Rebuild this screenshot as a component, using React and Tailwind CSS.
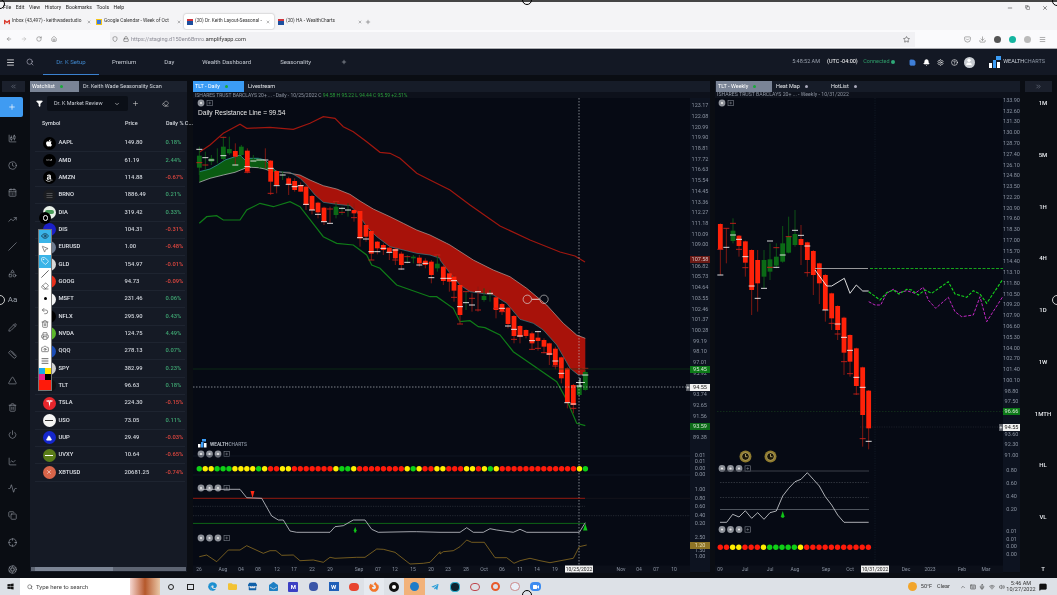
import React from "react";
import {
  Menu, Search, Plus, Save, Bell, Settings, HelpCircle, ArrowLeft, ArrowRight, RotateCw, Home, Shield, Lock, Star,
  Download, X, Minus, Copy, ChevronDown, ChevronsLeft, ChevronsRight, Filter, Eraser, CandlestickChart, Clock,
  CalendarDays, TrendingUp, Slash, Shapes, Pencil, Triangle, Trash2, Power, LineChart, Activity, Crosshair, Aperture,
  Ruler, Eye, MousePointer2, Tag as TagIcon, Undo2, Camera, Printer, AlignJustify, Pocket, ChevronUp, Mic, Wifi, Volume2, MessageSquare, User, Keyboard,
} from "lucide-react";
import { FaApple, FaAmazon, FaWindows, FaFirefoxBrowser, FaEdge, FaFolder, FaTelegramPlane, FaVideo, FaEnvelopeOpen, FaStore } from "react-icons/fa";
import { SiAmd, SiTesla, SiGmail } from "react-icons/si";

const z5 = (x, y) => [190 + x / 3, 95 + y / 3];
const z6 = (x, y) => [430 + x / 3, 260 + y / 3];
const z7 = (x, y) => [190 + x / 3, 430 + y / 3];
const z8 = (x, y) => [440 + x / 3, 430 + y / 3];
const z9 = (x, y) => [715 + x / 3, 80 + y / 3];
const z10 = (x, y) => [715 + x / 3, 270 + y / 3];
const z11 = (x, y) => [715 + x / 3, 440 + y / 3];
const pts = (m, a) => a.map((p) => m(p[0], p[1]).map((v) => v.toFixed(1)).join(",")).join(" ");

const D5 = [
  [28,182,218,"g",155,240,163,203],[46,0,0,"g",170,225,188,210],[64,190,200,"g",180,210,195,0],[82,0,0,"g",160,205,0,0],
  [100,155,192,"g",125,195,182,127],[118,162,175,"g",125,180,0,0],[136,168,185,"r",145,210,210,0],[154,155,180,"g",150,185,0,0],
  [172,167,230,"r",160,235,215,232],[190,0,0,"g",180,215,198,0],[208,0,0,"g",190,220,195,0],[226,0,0,"r",160,220,195,0],
  [242,197,260,"r",195,300,220,295],[260,228,270,"r",225,295,272,0],[278,0,0,"g",228,255,240,0],[296,250,268,"r",245,300,268,0],
  [314,258,285,"r",250,290,275,0],[332,270,290,"r",262,290,272,0],[348,275,330,"r",270,345,328,0],[366,303,345,"r",300,358,345,0],
  [384,323,352,"r",320,370,358,0],[402,338,380,"r",335,390,380,0],[420,0,0,"r",335,385,385,342],[438,335,360,"g",320,370,0,320],
  [456,0,0,"g",335,360,340,352],[474,0,0,"g",325,365,345,0],[492,345,355,"r",325,380,0,368],[510,348,430,"r",345,455,428,0],
  [528,390,425,"r",385,440,432,0],[544,408,476,"r",405,495,470,495],[562,440,460,"r",438,478,470,0],[580,450,465,"r",445,480,460,0],
  [598,458,472,"r",455,495,472,0],[616,462,490,"r",458,510,465,495],[634,476,510,"r",470,525,522,0],[652,0,0,"g",480,505,502,485],
  [670,485,490,"g",480,505,0,0],[688,488,505,"r",480,515,510,0],[706,497,510,"r",490,520,505,0],[724,500,540,"r",495,565,548,0],
  [742,506,520,"g",480,530,0,480],[760,515,558,"r",510,570,550,0],[778,535,560,"r",530,590,550,0],
];
const D6 = [
  [72,50,92,"r",45,125,62,112],[90,75,165,"r",70,192,140,192],[108,0,0,"g",95,150,128,95],[126,0,0,"r",100,155,135,115],
  [144,0,0,"r",80,155,95,150],[162,108,120,"g",85,125,0,0],[180,0,0,"g",90,125,100,0],[198,112,150,"r",110,175,0,145],
  [216,132,155,"r",128,165,145,155],[234,143,192,"r",140,205,198,0],[252,168,228,"r",165,250,208,238],[270,198,230,"r",195,250,228,0],
  [288,210,228,"r",208,235,0,0],[306,220,250,"r",215,270,242,268],[324,233,243,"r",212,272,215,265],[342,240,260,"r",235,280,0,278],
  [358,250,285,"r",248,315,282,0],[376,266,315,"r",260,328,303,318],[394,292,355,"r",290,370,340,0],[412,325,428,"r",322,445,428,0],
  [430,375,435,"r",372,460,432,445],[448,375,405,"g",360,410,378,0],[466,336,390,"g",330,392,345,325],
];
const W9 = [
  [16,432,508,"r",430,585,585,508],[34,0,0,"r",445,550,502,445],[54,452,483,"g",415,490,465,430],[72,467,498,"r",465,530,478,508],
  [91,484,548,"r",482,590,530,563],[258,477,495,"r",435,555,466,0],[165,538,575,"g",490,600,483,562],[184,530,557,"g",490,565,562,503],[203,490,545,"g",438,548,525,0],[221,470,518,"g",410,520,0,470],
  [240,462,495,"g",390,500,451,0],[277,487,540,"r",485,590,498,578],[295,513,585,"r",510,645,0,0],
  [313,550,610,"r",548,672,0,0],
];
const W10 = [
  [331,15,120,"r",12,155,120,0],[350,70,145,"r",68,180,0,160],[368,108,180,"r",106,210,162,192],[387,143,248,"r",140,315,202,275],
  [405,195,275,"r",193,320,241,311],[424,235,348,"r",233,375,322,372],[443,292,435,"r",290,530,352,506],[461,362,475,"r",360,538,514,0],
  [110,-60,60,"r",-62,135,48,0],[128,-30,40,"r",-60,125,85,0],[147,-30,20,"g",-60,55,55,0],
];
const CLOUD_G = [[28,230],[60,222],[82,210],[105,195],[135,185],[150,180],[165,195],[180,190],[205,190],[225,195],[240,210],[250,222],[262,230],[245,230],[225,222],[205,218],[185,217],[165,220],[135,232],[100,240],[60,250],[28,262]];
const RED_TOP = [[262,230],[300,235],[330,240],[360,255],[400,272],[440,282],[480,298],[510,318],[550,342],[600,365],[640,385],[680,405],[720,420],[770,445],[780,450]].map((p) => z5(p[0], p[1])).concat([[130,0],[190,30],[240,50],[290,85],[350,135],[400,190],[440,225],[466,235]].map((p) => z6(p[0], p[1])));
const RED_BOT = [[262,230],[300,232],[330,250],[350,270],[375,300],[400,322],[440,328],[480,332],[500,350],[530,395],[560,425],[600,455],[640,465],[680,475],[720,480],[750,490]].map((p) => z5(p[0], p[1])).concat([[30,0],[60,40],[90,75],[120,95],[190,105],[230,130],[270,178],[310,190],[340,210],[380,255],[420,325],[445,345],[466,345]].map((p) => z6(p[0], p[1])));
const str = (a) => a.map((p) => p[0].toFixed(1) + "," + p[1].toFixed(1)).join(" ");

function Candles({ data, map }) {
  return data.map((d, i) => {
    const [zx, t, b, c, wt, wb, w, r] = d;
    const x = map(zx, 0)[0];
    const y = (v) => map(0, v)[1];
    const wick = c === "g" ? "#0d5a16" : "#8a1a12";
    const body = c === "g" ? "#0b6a16" : "#ff2209";
    return (
      <g key={i}>
        <line x1={x} x2={x} y1={y(wt)} y2={y(wb)} stroke={wick} strokeWidth="0.9" />
        {t !== 0 && <rect x={x - 2.4} y={y(t)} width="4.8" height={y(b) - y(t)} fill={body} />}
        {r !== 0 && <line x1={x - 3} x2={x + 3} y1={y(r)} y2={y(r)} stroke="#c9201a" strokeWidth="0.9" />}
        {w !== 0 && <line x1={x - 3} x2={x + 3} y1={y(w)} y2={y(w)} stroke="#f2f2f2" strokeWidth="0.9" />}
      </g>
    );
  });
}

function IconRow({ x, y, n = 3 }) {
  const xs = [0, 8.5, 17].slice(0, n);
  return (
    <g>
      {xs.map((d) => (
        <g key={d}>
          <circle cx={x + d} cy={y} r="3.4" fill="#8d9199" />
          <circle cx={x + d} cy={y} r="1.1" fill="#e8e8e8" />
        </g>
      ))}
      <rect x={x + n * 8.5 + 0.5 - 3} y={y - 2.7} width="5.4" height="5.4" fill="none" stroke="#7c828c" strokeWidth="0.6" />
      <path d={`M${x + n * 8.5 + 0.2} ${y - 1.4}v2.8M${x + n * 8.5 - 1.2} ${y}h2.8`} stroke="#8d9199" strokeWidth="0.5" />
    </g>
  );
}

const DOTC = { G: "#0fd016", Y: "#ffee00", R: "#ff1a0a" };
const MAIN_DOTS = "GYYGGGYYYYGYRRYYRRRRRRRYGGYRRRRRRRRYGYRRYY" + "RRRYYRYGY" + "RRRRRRRRRRRRR" + "YG";
const WEEK_DOTS = "RRYYRRRYGGGGGYRRRRRRRRRRR";
const MAIN_TIME = [[199,"26"],[223,"Aug"],[241,"04"],[258,"08"],[277,"12"],[294,"17"],[312,"22"],[330,"29"],[359,"Sep"],[378,"07"],[395,"12"],[413,"15"],[431,"20"],[448,"23"],[466,"28"],[484,"Oct"],[502,"06"],[520,"11"],[537,"14"],[555,"19"],[621,"Nov"],[639,"04"],[656,"07"],[674,"10"]];
const WEEK_TIME = [[720,"09"],[745,"Jul"],[770,"Jul"],[795,"Aug"],[826,"Sep"],[850,"Oct"],[906,"Dec"],[930,"2023"],[962,"Feb"],[986,"Mar"]];

function AxisLabel({ children, h, hidden }) {
  return <div style={{ height: h }} className="flex items-center justify-center text-[5.5px] leading-none text-[#8b93a1]">{hidden ? null : children}</div>;
}

function PriceTag({ top, bg, text, children }) {
  return (
    <div style={{ top, backgroundColor: bg, color: text }} className="absolute left-0 right-0 h-[6.5px] flex items-center justify-center text-[5.5px] leading-none">
      {children}
    </div>
  );
}

function DailyChart() {
  return (
    <svg viewBox="193 98 497 475" className="w-[497px] h-[475px] block bg-[#060a14]" style={{ fontFamily: "Roboto, sans-serif" }}>
      <polygon points={pts(z5, CLOUD_G)} fill="#0a5c12" />
      <polyline points={pts(z5, [[28,230],[60,222],[82,210],[105,195],[135,185],[150,180],[165,195],[180,190],[205,190],[225,195],[240,210],[250,222],[262,230]])} fill="none" stroke="#3aa7a7" strokeWidth="0.7" />
      <polyline points={pts(z5, [[28,262],[60,250],[100,240],[135,232],[165,220],[185,217],[205,218],[225,222],[245,230]])} fill="none" stroke="#c8c8c8" strokeWidth="0.7" />
      <polygon points={str(RED_TOP.concat(RED_BOT.slice().reverse()))} fill="#a8120a" />
      <polyline points={str(RED_TOP)} fill="none" stroke="#c4b9b0" strokeWidth="0.6" />
      <polyline points={str(RED_BOT)} fill="none" stroke="#3a8f98" strokeWidth="0.6" />
      <polyline points={pts(z5, [[28,172],[60,150],[100,115],[150,88],[170,100],[240,97],[310,103],[360,85],[400,65],[435,70],[460,95],[490,110],[530,140],[570,172],[600,175],[630,190],[680,235],[720,255],[780,285]]) + " 470,205 500,226 530,240 560,252 575,256 585,262"} fill="none" stroke="#a0170f" strokeWidth="1.2" />
      <polyline points={pts(z5, [[28,385],[50,365],[80,362],[100,375],[150,375],[170,345],[210,325],[250,335],[300,320],[330,335],[400,425],[440,445],[490,450],[530,480],[545,510],[570,520],[620,570]]) + " " + pts(z6, [[0,110],[20,110],[70,145],[90,185],[120,182],[145,200],[165,203],[210,225],[250,275],[300,310],[380,365],[410,420],[440,490],[466,497]])} fill="none" stroke="#0f7c18" strokeWidth="1.2" />
      <Candles data={D5} map={z5} />
      <Candles data={D6} map={z6} />
      <line x1="193" x2="690" y1="369" y2="369" stroke="#0e3c14" strokeWidth="0.6" />
      <line x1="579" x2="579" y1="98" y2="565" stroke="#cfd3d8" strokeWidth="0.6" strokeDasharray="1.5 1.5" />
      <line x1="193" x2="690" y1="387" y2="387" stroke="#cfd3d8" strokeWidth="0.6" strokeDasharray="1.5 1.5" />
      <path d="M580 378v9M576 382.5h9" stroke="#fff" strokeWidth="0.8" />
      <circle cx="527.3" cy="299.3" r="4.2" fill="none" stroke="#d8d8d8" strokeWidth="0.7" />
      <circle cx="544" cy="299.3" r="4.2" fill="none" stroke="#c4c4c4" strokeWidth="0.7" />
      <line x1="532" x2="539.5" y1="299.3" y2="299.3" stroke="#fff" strokeWidth="0.8" />

      <IconRow x={201} y={103} n={1} />
      <text x="198" y="114.5" fontSize="6.6" fill="#e8e8e8" fontFamily="Liberation Sans, sans-serif">Daily Resistance Line = 99.54</text>

      <g transform="translate(198 439)">
        <rect x="0" y="5" width="2.5" height="3.5" fill="#fff" />
        <rect x="3" y="3" width="2.5" height="5.5" fill="#3b9cf5" />
        <rect x="6" y="4" width="2.5" height="4.5" fill="#fff" />
        <rect x="4" y="0" width="4" height="2.5" fill="#3b9cf5" />
      </g>
      <text x="210" y="446" fontSize="4.8" fontWeight="500" fill="#cfd5dd">WEALTH<tspan fill="#8e97a5">CHARTS</tspan></text>
      <IconRow x={201} y={454} />
      {[456, 475].map((y) => <line key={y} x1="193" x2="690" y1={y} y2={y} stroke="#161c28" strokeWidth="0.6" />)}
      {MAIN_DOTS.split("").map((c, i) => <circle key={i} cx={199.3 + i * 5.94} cy="468.7" r="2.7" fill={DOTC[c]} />)}

      <IconRow x={201} y={488} />
      <line x1="193" x2="585" y1="498.3" y2="498.3" stroke="#a51c10" strokeWidth="0.9" />
      <line x1="585" x2="690" y1="498.3" y2="498.3" stroke="#1c1a20" strokeWidth="0.6" />
      <line x1="193" x2="585" y1="506.3" y2="506.3" stroke="#3a3f48" strokeWidth="0.6" strokeDasharray="1.2 1.2" />
      <line x1="193" x2="690" y1="515.7" y2="515.7" stroke="#3a3f48" strokeWidth="0.6" strokeDasharray="1.2 1.2" />
      <line x1="193" x2="585" y1="523.4" y2="523.4" stroke="#0e6e16" strokeWidth="0.9" />
      <polyline points={pts(z7, [[28,178],[150,178],[170,203],[215,205],[245,258],[265,270],[280,270],[300,303],[320,307],[420,307],[435,290],[460,287],[490,270],[525,270],[545,298],[565,307],[660,305],[680,305],[750,307]]) + " " + pts(z8, [[0,307],[60,307],[80,293],[100,307],[130,307],[150,296],[170,300],[220,307],[240,298],[260,307],[418,307],[436,278]])} fill="none" stroke="#c9ccd2" strokeWidth="0.8" />
      <polygon points="250.5,491 254.5,491 252.5,498" fill="#ff2a14" />
      <polygon points="353.5,531 355.2,527 356.8,531" fill="#10c418" />
      <rect x="354.2" y="530" width="2" height="2.5" fill="#10c418" />
      <polygon points="583,530.5 585.3,523.5 587.5,530.5" fill="#10c418" />

      <IconRow x={201} y={538} />
      <polyline points={pts(z7, [[28,380],[50,375],[80,395],[115,360],[150,360],[170,347],[220,370],[240,362],[258,362],[275,376],[310,375],[330,392],[370,390],[400,397],[420,382],[435,385],[500,382],[525,382],[560,357],[580,358],[615,367],[660,402],[700,400],[720,397],[750,365]]) + " " + pts(z8, [[0,372],[10,365],[40,362],[60,350],[80,330],[95,337],[133,337],[165,383],[200,383],[222,400],[240,392],[270,385],[300,392],[330,398],[400,385],[418,350],[440,345]])} fill="none" stroke="#a07c24" strokeWidth="0.7" />

      <rect x="193" y="565.5" width="497" height="7.5" fill="#0b0f19" />
      {MAIN_TIME.map(([x, t]) => <text key={x} x={x} y="571" fontSize="5" textAnchor="middle" fill="#8b93a1">{t}</text>)}
      <rect x="565" y="565.5" width="28" height="7" fill="#f2f2f2" />
      <text x="579" y="571" fontSize="5" textAnchor="middle" fill="#222">10/25/2022</text>
    </svg>
  );
}

function WeeklyChart() {
  return (
    <svg viewBox="715 98 288 475" className="w-[288px] h-[475px] block bg-[#060a14]" style={{ fontFamily: "Roboto, sans-serif" }}>
      <line x1="875" x2="875" y1="98" y2="565" stroke="#1a2430" strokeWidth="0.6" strokeDasharray="1.2 1.2" />
      <line x1="717" x2="1003" y1="411.5" y2="411.5" stroke="#17401c" strokeWidth="0.6" strokeDasharray="1.5 1.5" />
      <line x1="860" x2="1003" y1="427" y2="427" stroke="#2a2e36" strokeWidth="0.6" strokeDasharray="1.2 1.2" />
      <Candles data={W9} map={z9} />
      <Candles data={W10} map={z10} />
      <line x1="815" x2="868" y1="268.5" y2="268.5" stroke="#bdbdbd" strokeWidth="0.8" />
      <line x1="870" x2="1003" y1="268.5" y2="268.5" stroke="#17b31c" strokeWidth="0.9" strokeDasharray="3 1.5" />
      <polyline points={pts(z10, [[300,0],[335,48],[350,48],[388,25],[405,70],[424,45],[443,63],[461,63]])} fill="none" stroke="#f4f4f4" strokeWidth="0.9" />
      <polyline points={pts(z10, [[461,95],[480,105],[497,105],[515,70],[535,58],[552,68],[575,62],[600,70],[625,52],[640,90],[662,115],[700,82],[720,125],[740,140],[775,135],[795,80],[815,155],[862,82]])} fill="none" stroke="#d62ad6" strokeWidth="0.9" strokeDasharray="3 1.5" />
      <polyline points={pts(z10, [[461,65],[495,90],[515,68],[535,60],[552,72],[575,58],[590,60],[610,75],[630,60],[650,70],[700,35],[720,72],[755,82],[775,62],[795,72],[815,100],[862,30]])} fill="none" stroke="#15d31c" strokeWidth="1.1" strokeDasharray="3 1.5" />
      <IconRow x={722} y={103} n={1} />

      {[745.5, 770.5].map((x) => (
        <g key={x}>
          <circle cx={x} cy="456.5" r="6" fill="#8e7a2e" />
          <circle cx={x} cy="456.5" r="3.8" fill="#1a1608" stroke="#e2cf82" strokeWidth="0.6" />
          <path d={`M${x} 454v2.7h2`} stroke="#e2cf82" strokeWidth="0.7" fill="none" />
        </g>
      ))}

      <IconRow x={722} y={468.5} />
      <line x1="720" x2="869" y1="471" y2="471" stroke="#3a3f48" strokeWidth="1.2" />
      <line x1="720" x2="869" y1="482.5" y2="482.5" stroke="#4a4f58" strokeWidth="0.6" strokeDasharray="1.5 1.2" />
      <line x1="720" x2="869" y1="497.5" y2="497.5" stroke="#4a4f58" strokeWidth="0.6" strokeDasharray="1.5 1.2" />
      <line x1="720" x2="869" y1="509.5" y2="509.5" stroke="#70757e" strokeWidth="0.7" />
      <polyline points={pts(z11, [[15,247],[35,247],[53,223],[72,231],[91,212],[110,235],[128,218],[147,238],[165,218],[184,213],[203,168],[221,145],[240,125],[258,118],[277,98],[295,118],[313,138],[331,170],[350,195],[368,225],[387,247],[461,247]])} fill="none" stroke="#d6d8dc" strokeWidth="0.8" />
      <polygon points="780.7,517 782.7,511 784.7,517" fill="#10c418" />
      <rect x="781.6" y="516" width="2.2" height="1.8" fill="#10c418" />
      <IconRow x={722} y={529.5} />
      {WEEK_DOTS.split("").map((c, i) => <circle key={i} cx={720.3 + i * 6.17} cy="547.3" r="2.7" fill={DOTC[c]} />)}

      <rect x="715" y="565.5" width="288" height="7.5" fill="#0b0f19" />
      {WEEK_TIME.map(([x, t]) => <text key={x} x={x} y="571" fontSize="5" textAnchor="middle" fill="#8b93a1">{t}</text>)}
      <rect x="861" y="565.5" width="28" height="7" fill="#f2f2f2" />
      <text x="875" y="571" fontSize="5" textAnchor="middle" fill="#222">10/31/2022</text>
    </svg>
  );
}

const MAIN_AXIS = Array.from({ length: 32 }, (_, i) => (123.17 - i * 1.09).toFixed(2));
const WEEK_AXIS = Array.from({ length: 34 }, (_, i) => (133.9 - i * 1.3).toFixed(2));
const MAIN_COVERED = [14, 26, 30];
const WEEK_COVERED = [29, 30];

function Logo({ bg, children }) {
  return <div style={{ backgroundColor: bg }} className="w-[13px] h-[13px] rounded-full flex items-center justify-center shrink-0 overflow-hidden">{children}</div>;
}

const ROWS = [
  ["AAPL","149.80","0.18%","#000",<FaApple className="w-[8px] h-[8px] text-white" />],
  ["AMD","61.19","2.44%","#000",<SiAmd className="w-[6px] h-[6px] text-white" />],
  ["AMZN","114.88","-0.67%","#000",<FaAmazon className="w-[8px] h-[8px] text-white" />],
  ["BRNO","1886.49","0.21%","#1a1c20",<AlignJustify className="w-[7px] h-[7px] text-[#777]" />],
  ["DIA","319.42","0.33%","#e8f0e8",<span className="w-[9px] h-[4px] bg-[#4a9d5a] rounded-sm" />],
  ["DIS","104.31","-0.31%","#1c20c8",null],
  ["EURUSD","1.00","-0.48%","#6f7c90",null],
  ["GLD","154.97","-0.01%","#d8d8d8",null],
  ["GOOG","94.73","-0.09%","#e8301c",null],
  ["MSFT","231.46","0.06%","#f2f2f2",null],
  ["NFLX","295.90","0.43%","#000",null],
  ["NVDA","124.75","4.49%","#5cb82a",null],
  ["QQQ","278.13","0.07%","#1d4fb8",null],
  ["SPY","382.99","0.23%","#cfcfcf",null],
  ["TLT","96.63","0.18%","#111",null],
  ["TSLA","224.30","-0.15%","#e8262c",<SiTesla className="w-[7px] h-[7px] text-white" />],
  ["USO","73.05","0.11%","#f4f4f4",<span className="w-[8px] h-[1.5px] bg-[#333]" />],
  ["UUP","29.49","-0.03%","#1426cc",<Triangle className="w-[6px] h-[6px] text-white fill-white" />],
  ["UVXY","10.64","-0.65%","#5a7c18",<span className="w-[8px] h-[1px] bg-white" />],
  ["XBTUSD","20681.25","-0.74%","#d8654a",<X className="w-[6px] h-[6px] text-white" />],
];

const TOOLS = [CandlestickChart, Clock, CalendarDays, TrendingUp, Slash, Shapes, null, Pencil, Ruler, Triangle, Trash2, Power, LineChart, Activity, Copy, Crosshair, Aperture];

const TASK = [
  [<FaEdge className="w-[9px] h-[9px] text-[#1a8fd0]" />],
  [<FaFolder className="w-[9px] h-[9px] text-[#f2c233]" />],
  [<FaStore className="w-[9px] h-[9px] text-[#0f5fa8]" />],
  [<FaEnvelopeOpen className="w-[9px] h-[9px] text-[#1d7fc4]" />],
  [<span className="w-[10px] h-[10px] bg-[#3b3fc4] rounded-[1px] text-white text-[6px] leading-[10px] text-center font-bold">M</span>],
  [<span className="w-[9px] h-[9px] bg-[#3a56a8] rounded-sm" />],
  [<span className="w-[10px] h-[9px] bg-[#1f5fb8] text-white text-[6px] leading-[9px] text-center font-bold">W</span>],
  [<span className="w-[10px] h-[8px] bg-[#e8442e] rounded-sm" />],
  [<FaFirefoxBrowser className="w-[10px] h-[10px] text-[#f2762a]" />, "bg-[#e6eaf0]"],
  [<span className="w-[10px] h-[10px] bg-[#111] rounded-full border-[2px] border-[#111] flex items-center justify-center"><span className="w-[4px] h-[4px] bg-white rounded-full" /></span>],
  [<span className="w-[9px] h-[9px] bg-[#1f7cc8] rounded-full" />, "bg-[#f2b27a]"],
  [<FaTelegramPlane className="w-[8px] h-[8px] text-[#2a9ed8]" />],
  [<span className="w-[10px] h-[10px] bg-[#0d2430] rounded-sm border border-[#2ab0d0]" />],
  [<span className="w-[10px] h-[8px] rounded-full border-[1.5px] border-[#c0444c]" />],
  [<span className="w-[9px] h-[9px] rounded-full border-[2px] border-[#e85a2a]" />],
  [<span className="w-[10px] h-[9px] rounded-full border border-[#c88] bg-[#e8f0f8]" />],
  [<span className="w-[11px] h-[9px] bg-[#3b8bf0] rounded-sm flex items-center justify-center"><FaVideo className="w-[6px] h-[6px] text-white" /></span>],
];

function WCLogo() {
  return (
    <div className="flex items-end gap-[1px] h-[12px] w-[12px] relative">
      <span className="w-[3px] h-[5px] bg-white" />
      <span className="w-[3px] h-[8px] bg-[#3b9cf5]" />
      <span className="w-[3px] h-[6px] bg-white" />
      <span className="absolute right-0 top-0 w-[5px] h-[4px] bg-[#3b9cf5]" />
    </div>
  );
}

export default function App() {
  return (
    <div className="w-[1057px] h-[595px] flex flex-col overflow-hidden relative bg-[#0a0d13] blur-[0.3px] [font-family:Roboto,sans-serif]">
      <div className="h-[2px] bg-[#454545] shrink-0" />
      <div className="h-[11px] shrink-0 bg-[#f4f4f6] flex items-center pl-[3px] pr-[9px] text-[5.2px] text-[#222] leading-none">
        <div className="flex gap-[4.5px]">
          <span>File</span><span>Edit</span><span>View</span><span>History</span><span>Bookmarks</span><span>Tools</span><span>Help</span>
        </div>
        <div className="ml-auto flex gap-[12px] items-center text-[#222]">
          <Minus className="w-[6px] h-[6px]" /><Copy className="w-[5px] h-[5px]" /><X className="w-[6px] h-[6px]" />
        </div>
      </div>
      <div className="h-[17px] shrink-0 bg-[#f4f4f6] flex items-center text-[4.8px] text-[#333] leading-none pl-[3px]">
        <div className="w-[90px] flex items-center pl-[1px] pr-[2px] gap-[2px] whitespace-nowrap">
          <SiGmail className="w-[6px] h-[6px] text-[#d93a2c] shrink-0" /><span className="flex-1">Inbox (43,497) - keithwadestudio</span><X className="w-[4px] h-[4px]" />
        </div>
        <div className="w-[91px] flex items-center pl-[3px] pr-[3px] gap-[2px] whitespace-nowrap">
          <span className="w-[6px] h-[6px] bg-[#3b78e0] border border-[#f5c518] shrink-0" /><span className="flex-1">Google Calendar - Week of Oct</span><X className="w-[4px] h-[4px]" />
        </div>
        <div className="w-[90px] h-[15px] bg-white rounded-[2px] shadow-[0_0_2px_rgba(0,0,0,0.35)] flex items-center pl-[3px] pr-[4px] gap-[2px] whitespace-nowrap">
          <span className="w-[6px] h-[6px] bg-[#1d4f9e] border-t-2 border-[#d0343c] shrink-0" /><span className="flex-1">(20) Dr. Keith Layout-Seasonal -</span><X className="w-[4px] h-[4px]" />
        </div>
        <div className="w-[90px] flex items-center pl-[4px] gap-[2px] whitespace-nowrap">
          <span className="w-[6px] h-[6px] bg-[#1d4f9e] border-t-2 border-[#d0343c] shrink-0" /><span className="w-[70px]">(20) HA - WealthCharts</span><X className="w-[4px] h-[4px]" />
        </div>
        <Plus className="w-[6px] h-[6px] ml-[1px] text-[#555]" />
      </div>
      <div className="h-[18px] shrink-0 bg-[#fafafc] flex items-center text-[#666]">
        <div className="w-[110px] flex items-center pl-[6px] gap-[9px] shrink-0">
          <ArrowLeft className="w-[6px] h-[6px]" /><ArrowRight className="w-[6px] h-[6px] text-[#aaa]" /><RotateCw className="w-[6px] h-[6px]" /><Home className="w-[6px] h-[6px]" />
        </div>
        <div className="w-[805px] h-[15px] bg-[#f1f1f4] flex items-center pl-[2px] text-[5.6px] text-[#8a8a94] relative shrink-0">
          <Shield className="w-[6px] h-[6px] text-[#555]" /><Lock className="ml-[4.5px] w-[6px] h-[6px] text-[#555]" /><span className="ml-[2.5px]">https://staging.d150en6Bmro.<span className="text-[#333]">amplifyapp.com</span></span>
          <Star className="w-[7px] h-[7px] absolute right-[5px] text-[#444]" />
        </div>
        <div className="flex-1 flex items-center pl-[49px] gap-[8px] text-[#777]">
          <Pocket className="w-[7px] h-[7px]" />
          <Download className="w-[7px] h-[7px]" />
          <span className="w-[7px] h-[7px] rounded-full bg-[#555]" />
          <span className="w-[7px] h-[7px] rounded-full bg-[#15b5a0]" />
          <span className="w-[7px] h-[7px] rounded-sm bg-[#bbb]" />
          <Menu className="w-[7px] h-[7px]" />
        </div>
      </div>
      <div className="h-[1px] shrink-0 bg-[#a9abb0]" />
      <div className="h-[26px] shrink-0 bg-[#131824] flex items-center text-[6px] text-[#c4c9d2] leading-none relative">
        <Menu className="w-[9px] h-[9px] ml-[6px] text-white shrink-0" />
        <Search className="w-[8px] h-[8px] ml-[11px] text-[#aab] shrink-0" />
        <div className="ml-[9px] w-[56px] h-full flex items-center justify-center text-[#3f88cf] border-b-[1.5px] border-[#3b82d0]">Dr. K Setup</div>
        <span className="ml-[13px]">Premium</span>
        <span className="ml-[28px]">Day</span>
        <span className="ml-[28px]">Wealth Dashboard</span>
        <span className="ml-[29px]">Seasonality</span>
        <Plus className="w-[6px] h-[6px] ml-[30px]" />
        <div className="ml-auto flex items-center pr-[12px]">
          <span className="text-[5.5px] text-[#9aa1ad]">5:48:52 AM</span>
          <span className="ml-[7px] text-[5.5px] text-white">(UTC -04:00)</span>
          <span className="ml-[5.5px] text-[5.5px] text-[#2f9d6a]">Connected</span>
          <span className="ml-[1.5px] w-[3.5px] h-[3.5px] rounded-full bg-[#2fa878]" />
          <Save className="ml-[14px] w-[7px] h-[7px] text-[#3f7fd8] fill-[#3f7fd8]" />
          <Bell className="ml-[7px] w-[7px] h-[7px] text-white fill-white" />
          <Settings className="ml-[7px] w-[7px] h-[7px] text-white" />
          <HelpCircle className="ml-[7px] w-[7px] h-[7px] text-white" />
          <span className="ml-[6px] w-[11px] h-[11px] rounded-full bg-[#c8ccd2] flex items-center justify-center"><User className="w-[8px] h-[8px] text-white fill-white" /></span>
          <span className="ml-[14.5px]"><WCLogo /></span>
          <span className="ml-[2px] text-[5.5px] text-[#c9cfd8]">WEALTH<span className="text-[#8e97a5]">CHARTS</span></span>
        </div>
      </div>
      <div className="flex-1 min-h-0 flex pt-[6px] pb-[6px] bg-[#0a0d13]">
        <div className="w-[26px] shrink-0 flex flex-col items-start text-[#9aa0aa]">
          <div className="shrink-0 ml-[2px] w-[23px] h-[11px] bg-[#1b202c] flex items-center justify-center"><ChevronsLeft className="w-[7px] h-[7px] text-[#7a8290]" /></div>
          <div className="shrink-0 mt-[5px] w-[23px] h-[20px] bg-[#3f9bf2] rounded-r-[2px] flex items-center justify-center"><Plus className="w-[8px] h-[8px] text-white" /></div>
          <div className="shrink-0 mt-[8.5px] w-[25px] flex flex-col items-center">
            {TOOLS.map((I, i) => (
              <div key={i} className="h-[26.9px] shrink-0 flex items-center justify-center">
                {I ? <I className="w-[9px] h-[9px]" strokeWidth={1.6} /> : <span className="text-[8px] leading-none">Aa</span>}
              </div>
            ))}
          </div>
        </div>
        <div className="ml-[4px] w-[157px] shrink-0 bg-[#151a25] flex flex-col relative">
          <div className="h-[11px] bg-[#1b212d] flex items-center text-[5.5px] leading-none text-white">
            <div className="w-[49px] h-full bg-[#7a8496] flex items-center pl-[2px]">Watchlist<span className="ml-[5px] w-[3px] h-[3px] rounded-full bg-[#19a93a]" /></div>
            <span className="ml-[4px] text-[#d8dce2]">Dr. Keith Wade Seasonality Scan</span>
          </div>
          <div className="mt-[4px] h-[15px] flex items-center">
            <Filter className="ml-[6px] w-[7px] h-[7px] text-white fill-white" />
            <div className="ml-[4px] w-[81px] h-[15px] bg-[#0b0f17] rounded-[2px] flex items-center pl-[7px] text-[5.5px] text-[#c8ccd4]">
              Dr. K Market Review<ChevronDown className="w-[6px] h-[6px] ml-auto mr-[8px] text-white" />
            </div>
            <Plus className="ml-[4px] w-[7px] h-[7px] text-[#ccc]" />
            <Eraser className="ml-[23px] w-[7px] h-[7px] text-[#ccc]" />
          </div>
          <div className="mt-[7px] h-[12px] flex items-center text-[5.5px] font-medium text-[#d8dce2] leading-none">
            <span className="ml-[12px] w-[83px] shrink-0">Symbol</span>
            <span className="w-[41px] shrink-0">Price</span>
            <span className="whitespace-nowrap">Daily % C...</span>
          </div>
          <div className="mt-[5px] ml-[5px] mr-[2px] flex flex-col">
            {ROWS.map((r) => (
              <div key={r[0]} className="h-[17.33px] flex items-center border-b border-[#1e2430] text-[5.8px] font-medium leading-none">
                <div className="ml-[7.5px]"><Logo bg={r[3]}>{r[4]}</Logo></div>
                <span className="ml-[3px] w-[66px] text-[#dfe2e8]">{r[0]}</span>
                <span className="w-[41px] text-[#cfd3da]">{r[1]}</span>
                <span className={r[2][0] === "-" ? "text-[#e0473f]" : "text-[#3fa572]"}>{r[2]}</span>
              </div>
            ))}
          </div>
          <div className="mt-auto mb-[1.5px] h-[4px] mx-[1px] bg-[#5d6472]"><div className="w-[78px] h-full ml-[4px] bg-[#7b8494]" /></div>
        </div>
        <div className="ml-[6px] w-[517px] shrink-0 flex flex-col bg-[#131824]">
          <div className="h-[11px] shrink-0 bg-[#161c28] flex items-center text-[5.5px] text-[#e6e8ec] leading-none">
            <div className="w-[51px] h-full bg-[#3b9cf5] flex items-center pl-[2px] text-white">TLT - Daily<span className="ml-[5px] w-[3px] h-[3px] rounded-full bg-[#19a93a]" /></div>
            <span className="ml-[4px]">Livestream</span>
          </div>
          <div className="h-[6px] shrink-0 flex items-center pl-[2px] text-[5px] text-[#8f96a3] leading-none bg-[#0d111b] whitespace-nowrap">
            ISHARES TRUST BARCLAYS 20+ ... - Daily - 10/25/2022 C&nbsp;<span className="text-[#2a9d3a]">94.58 H 95.22 L 94.44 C 95.59 +2.51%</span>
          </div>
          <div className="flex-1 flex min-h-0">
            <DailyChart />
            <div className="w-[20px] bg-[#0d1320] relative pt-[2.65px]">
              {MAIN_AXIS.map((v, i) => <AxisLabel key={v} h={10.71} hidden={MAIN_COVERED.includes(i)}>{v}</AxisLabel>)}
              <div className="mt-[9.4px]">{["0.01", "0.01", "0.00", "0.00"].map((v, i) => <AxisLabel key={i} h={6.4}>{v}</AxisLabel>)}</div>
              <div className="mt-[7.3px]">{["1.00", "0.80", "0.60", "0.40", "0.20"].map((v, i) => <AxisLabel key={i} h={8.6}>{v}</AxisLabel>)}</div>
              <div className="mt-[6.1px]">{["2.50", "1.80", "1.50", "1.00"].map((v, i) => <AxisLabel key={i} h={6.4} hidden={i === 1}>{v}</AxisLabel>)}</div>
              <PriceTag top={158} bg="#6b1a16" text="#d8c8c8">107.58</PriceTag>
              <PriceTag top={268} bg="#0c7a18" text="#d8e8d8">95.45</PriceTag>
              <PriceTag top={286} bg="#f2f2f2" text="#222">94.55</PriceTag>
              <PriceTag top={325} bg="#0c6a18" text="#d8e8d8">93.59</PriceTag>
              <PriceTag top={444} bg="#8e7426" text="#eadfb8">1.20</PriceTag>
              <div className="absolute left-[-4px] top-[286px] w-[4px] h-[6.5px] bg-[#5a5e66] text-white text-[5px] leading-[6.5px] text-center">+</div>
            </div>
          </div>
        </div>
        <div className="ml-[5px] w-[305px] shrink-0 flex flex-col bg-[#131824]">
          <div className="h-[11px] shrink-0 bg-[#161c28] flex items-center text-[5.5px] text-[#e6e8ec] leading-none">
            <div className="ml-[1px] w-[56px] h-full bg-[#7a8496] flex items-center pl-[2px] text-white">TLT - Weekly<span className="ml-[5px] w-[3px] h-[3px] rounded-full bg-[#19a93a]" /></div>
            <span className="ml-[4px]">Heat Map</span><span className="ml-[5px] w-[3px] h-[3px] rounded-full bg-[#aab]" />
            <span className="ml-[23px]">HotList</span><span className="ml-[5px] w-[3px] h-[3px] rounded-full bg-[#aab]" />
          </div>
          <div className="h-[6px] shrink-0 flex items-center pl-[2px] text-[5.2px] text-[#8f96a3] leading-none bg-[#0d111b] whitespace-nowrap">
            ISHARES TRUST BARCLAYS 20+ ... - Weekly - 10/31/2022
          </div>
          <div className="flex-1 flex min-h-0">
            <WeeklyChart />
            <div className="w-[17px] bg-[#0d1320] relative">
              <div className="-mt-[2.7px]">{WEEK_AXIS.map((v, i) => <AxisLabel key={v} h={10.77} hidden={WEEK_COVERED.includes(i)}>{v}</AxisLabel>)}</div>
              <div className="mt-[3px]">{["0.80", "0.60", "0.40", "0.20"].map((v) => <AxisLabel key={v} h={13}>{v}</AxisLabel>)}</div>
              <div className="mt-[11.7px]">{["0.01", "0.01", "0.00", "0.00"].map((v, i) => <AxisLabel key={i} h={7.67}>{v}</AxisLabel>)}</div>
              <PriceTag top={310} bg="#0c7a18" text="#d8e8d8">96.66</PriceTag>
              <PriceTag top={326} bg="#f2f2f2" text="#222">94.55</PriceTag>
              <div className="absolute left-[-4px] top-[326px] w-[4px] h-[6.5px] bg-[#5a5e66] text-white text-[5px] leading-[6.5px] text-center">+</div>
            </div>
          </div>
        </div>
        <div className="ml-[5px] w-[32px] shrink-0 flex flex-col">
          <div className="shrink-0 w-[27px] h-[11px] bg-[#1b202c] flex items-center justify-center"><ChevronsRight className="w-[7px] h-[7px] text-[#7a8290]" /></div>
          <div className="shrink-0 mt-[8px] w-[36px] h-[472px] flex flex-col justify-between items-center text-[6px] font-medium text-[#e8eaee] leading-none">
            {["1M", "5M", "1H", "4H", "1D", "1W", "1MTH", "HL", "VL", "T"].map((t) => <span key={t}>{t}</span>)}
          </div>
        </div>
      </div>
      <div className="relative z-10 h-[17px] shrink-0 bg-[#dde1e7] flex items-center text-[#333] leading-none">
        <div className="w-[20px] flex justify-center shrink-0"><FaWindows className="w-[7px] h-[7px] text-[#111]" /></div>
        <div className="w-[140px] h-full bg-white flex items-center pl-[7px] shrink-0 relative">
          <Search className="w-[6px] h-[6px] text-[#333]" />
          <span className="ml-[3px] text-[6px] text-[#444]">Type here to search</span>
          <span className="absolute right-0 top-0 bottom-0 w-[30px] bg-gradient-to-r from-[#f4d6d0] via-[#b5582a] to-[#e8c8a8]" />
        </div>
        <div className="w-[21px] flex justify-center shrink-0"><span className="w-[6px] h-[6px] rounded-full border border-[#222]" /></div>
        <div className="w-[19px] flex justify-center shrink-0"><span className="w-[7px] h-[6px] border border-[#222]" /></div>
        <div className="flex items-center shrink-0 ml-[2.5px]">
          {TASK.map((t, i) => <div key={i} className={"w-[20.2px] h-[17px] flex items-center justify-center " + (t[1] || "")}>{t[0]}</div>)}
        </div>
        <div className="ml-auto flex items-center pr-[10px] text-[5.5px] text-[#333]">
          <span className="w-[9px] h-[9px] rounded-full bg-[#f2a52a]" />
          <span className="ml-[4px]">50°F</span><span className="ml-[5px]">Clear</span>
          <ChevronUp className="ml-[10px] w-[6px] h-[6px]" />
          <Keyboard className="ml-[3.8px] w-[6px] h-[6px]" />
          <Mic className="ml-[3.8px] w-[6px] h-[6px]" />
          <Wifi className="ml-[3.8px] w-[6px] h-[6px]" />
          <Volume2 className="ml-[3.8px] w-[6px] h-[6px]" />
          <div className="ml-[1.5px] w-[29px] flex flex-col items-center gap-[1px]"><span>5:46 AM</span><span>10/27/2022</span></div>
          <MessageSquare className="ml-[3.5px] w-[8px] h-[8px] text-[#111] fill-[#111]" />
        </div>
      </div>

      <div className="absolute left-[39px] top-[212px] w-[12px] h-[12px] rounded-full bg-black flex items-center justify-center"><span className="w-[5px] h-[6px] rounded-full border-[1.5px] border-white" /></div>
      <div className="absolute left-[38px] top-[229px] w-[14px] h-[162px] bg-white border border-[#777] flex flex-col items-center text-[#555]">
        <div className="w-full h-[12.5px] bg-[#3ab4e8] flex items-center justify-center"><Eye className="w-[8px] h-[8px] text-[#123]" /></div>
        <div className="h-[12.5px] flex items-center"><MousePointer2 className="w-[8px] h-[8px]" /></div>
        <div className="w-full h-[12.5px] bg-[#3ab4e8] flex items-center justify-center"><TagIcon className="w-[8px] h-[8px] text-white" /></div>
        <div className="h-[12.5px] flex items-center"><Slash className="w-[8px] h-[8px] text-[#222]" /></div>
        <div className="h-[12.5px] flex items-center"><Eraser className="w-[8px] h-[8px]" /></div>
        <div className="h-[12.5px] flex items-center"><span className="w-[3px] h-[3px] rounded-full bg-black" /></div>
        <div className="h-[12.5px] flex items-center"><Undo2 className="w-[8px] h-[8px]" /></div>
        <div className="h-[12.5px] flex items-center"><Trash2 className="w-[8px] h-[8px]" /></div>
        <div className="h-[12.5px] flex items-center"><Printer className="w-[8px] h-[8px]" /></div>
        <div className="h-[12.5px] flex items-center"><Camera className="w-[8px] h-[8px]" /></div>
        <div className="h-[12.5px] flex items-center"><AlignJustify className="w-[8px] h-[8px] text-[#222]" /></div>
        <div className="w-full grid grid-cols-2 shrink-0">
          <span className="h-[6px] bg-[#1aa8e8]" /><span className="h-[6px] bg-[#ffe000]" />
          <span className="h-[6px] bg-[#e8208c]" /><span className="h-[6px] bg-black" />
        </div>
        <div className="w-full flex-1 bg-[#ff1a0a]" />
      </div>

      <span className="absolute z-20 left-[522px] top-[-5px] w-[10px] h-[10px] rounded-full border border-black" />
      <span className="absolute z-20 left-[-5px] top-[-1px] w-[10px] h-[10px] rounded-full border border-black" />
      <span className="absolute z-20 right-[-5px] top-[-4px] w-[10px] h-[10px] rounded-full border border-black" />
      <span className="absolute z-20 left-[-5px] top-[295px] w-[10px] h-[10px] rounded-full border border-[#ccc]" />
      <span className="absolute z-20 right-[-5px] top-[295px] w-[10px] h-[10px] rounded-full border border-[#ccc]" />
      <span className="absolute z-20 left-[522px] bottom-[-5px] w-[10px] h-[10px] rounded-full border border-black" />
    </div>
  );
}
